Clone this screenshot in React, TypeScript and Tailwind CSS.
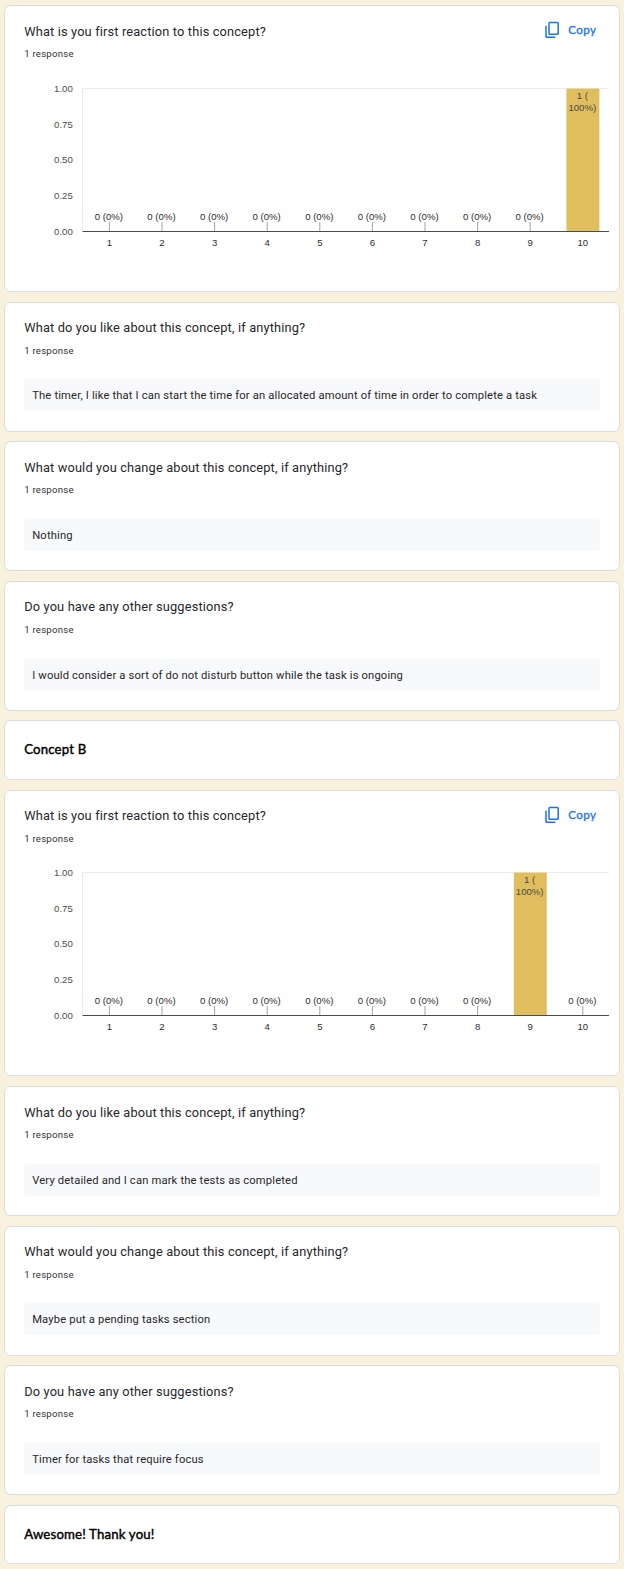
import React from "react";

function Card({ className, children }: { className: string; children: React.ReactNode }) {
  return (
    <section className={`w-[616px] shrink-0 rounded-[7px] border border-[#d8dce2] bg-white ${className}`}>
      {children}
    </section>
  );
}

function Question({ title, tight = false }: { title: string; tight?: boolean }) {
  return (
    <div className="pl-[19.2px]">
      <h2 className={`h-5 text-[12.8px] leading-5 tracking-[0.155px] text-[#26272b] ${tight ? "mb-[5px]" : "mb-1"}`}>
        {title}
      </h2>
      <p className="h-4 text-[9.6px] leading-4 tracking-[0.24px] text-[#303134]">1 response</p>
    </div>
  );
}

function CopyButton() {
  return (
    <button className="flex h-[18px] items-center text-[#1a73e8]">
      <svg width="16" height="18" viewBox="0 0 16 18" fill="none" stroke="currentColor" strokeWidth="1.5">
        <rect x="5" y="1.5" width="9.2" height="11.8" rx="0.8" />
        <path d="M2 4.8V15.5q0 .8 .8 .8H11.3" />
      </svg>
      <span className="ml-[8px] h-[18px] font-['Lato'] text-[11.7px] leading-[16px] tracking-[0.36px] [-webkit-text-stroke:0.3px_#1a73e8]">
        Copy
      </span>
    </button>
  );
}

const scores = [1, 2, 3, 4, 5, 6, 7, 8, 9, 10];
const levels = [
  { label: "1.00", y: 92 },
  { label: "0.75", y: 128 },
  { label: "0.50", y: 163 },
  { label: "0.25", y: 199 },
  { label: "0.00", y: 235 },
];

function BarChart({ picked }: { picked: number }) {
  return (
    <svg width="614" height="180" viewBox="5 80 614 180" className="block font-['Liberation_Sans'] text-[9.6px]">
      <rect x="82" y="88" width="527" height="1" fill="#ebebeb" />
      <rect x="82" y="88" width="1" height="143" fill="#ebebeb" />
      {levels.map(({ label, y }) => (
        <text key={label} x="72.8" y={y} textAnchor="end" fill="#4c4c4c">
          {label}
        </text>
      ))}
      {scores.map((score, i) => {
        const x = 109.4 + i * 52.6;
        return (
          <g key={score} textAnchor="middle">
            {score === picked ? (
              <>
                <rect x={x - 16.4} y="88.6" width="33" height="142.4" fill="#e0be5e" />
                <text x={x - 0.5} y="99" fill="#484848">1 (</text>
                <text x={x - 0.5} y="111" fill="#484848">100%)</text>
              </>
            ) : (
              <>
                <rect x={x - 0.5} y="222" width="1" height="9" fill="#a3a3a3" />
                <text x={x - 0.5} y="220" fill="#2c2c2c">0 (0%)</text>
              </>
            )}
            <text x={x} y="246" fill="#2c2c2c">{score}</text>
          </g>
        );
      })}
      <rect x="82.5" y="231" width="526.5" height="1" fill="#4c4c4c" />
    </svg>
  );
}

function ChartCard({ className, picked, tight = false }: { className: string; picked: number; tight?: boolean }) {
  return (
    <Card className={className}>
      <div className={`flex items-start justify-between pr-[22.5px] ${tight ? "h-[73px] pt-[15px]" : "h-[74px] pt-4"}`}>
        <Question title="What is you first reaction to this concept?" tight={tight} />
        <div className={tight ? "" : "-mt-px"}>
          <CopyButton />
        </div>
      </div>
      <BarChart picked={picked} />
    </Card>
  );
}

function AnswerCard({ className, title, answer, tight = false, high = false }: {
  className: string;
  title: string;
  answer: string;
  tight?: boolean;
  high?: boolean;
}) {
  return (
    <Card className={`h-[130px] ${tight ? "pt-[15px]" : "pt-4"} ${className}`}>
      <Question title={title} tight={tight} />
      <div className={`ml-[19px] h-8 w-[576px] rounded-[3px] bg-[#f8f9fa] pl-[8.2px] text-[11.2px] leading-[34px] tracking-[0.165px] text-[#26272b] ${high ? "mt-5" : "mt-[21px]"}`}>
        {answer}
      </div>
    </Card>
  );
}

function SectionCard({ className, title }: { className: string; title: string }) {
  return (
    <Card className={`pt-[18px] ${className}`}>
      <h1 className="pl-[19.2px] font-['Lato'] text-[13.2px] leading-5 tracking-[0.18px] text-black [-webkit-text-stroke:0.4px_#000]">
        {title}
      </h1>
    </Card>
  );
}

export default function App() {
  return (
    <main className="flex h-[1569px] w-full flex-col bg-[#f8f1dd] pt-[5px] pl-1 font-['Roboto']">
      <ChartCard className="h-[287px]" picked={10} />
      <AnswerCard
        className="mt-[10px]"
        title="What do you like about this concept, if anything?"
        answer="The timer, I like that I can start the time for an allocated amount of time in order to complete a task"
        tight
        high
      />
      <AnswerCard className="mt-[9px]" title="What would you change about this concept, if anything?" answer="Nothing" />
      <AnswerCard
        className="mt-[10px]"
        title="Do you have any other suggestions?"
        answer="I would consider a sort of do not disturb button while the task is ongoing"
        tight
      />
      <SectionCard className="mt-[9px] h-[60px]" title="Concept B" />
      <ChartCard className="mt-[10px] h-[286px]" picked={9} tight />
      <AnswerCard
        className="mt-[10px]"
        title="What do you like about this concept, if anything?"
        answer="Very detailed and I can mark the tests as completed"
      />
      <AnswerCard
        className="mt-[10px]"
        title="What would you change about this concept, if anything?"
        answer="Maybe put a pending tasks section"
        tight
        high
      />
      <AnswerCard className="mt-[9px]" title="Do you have any other suggestions?" answer="Timer for tasks that require focus" />
      <SectionCard className="mt-[10px] h-[59px]" title="Awesome! Thank you!" />
    </main>
  );
}
